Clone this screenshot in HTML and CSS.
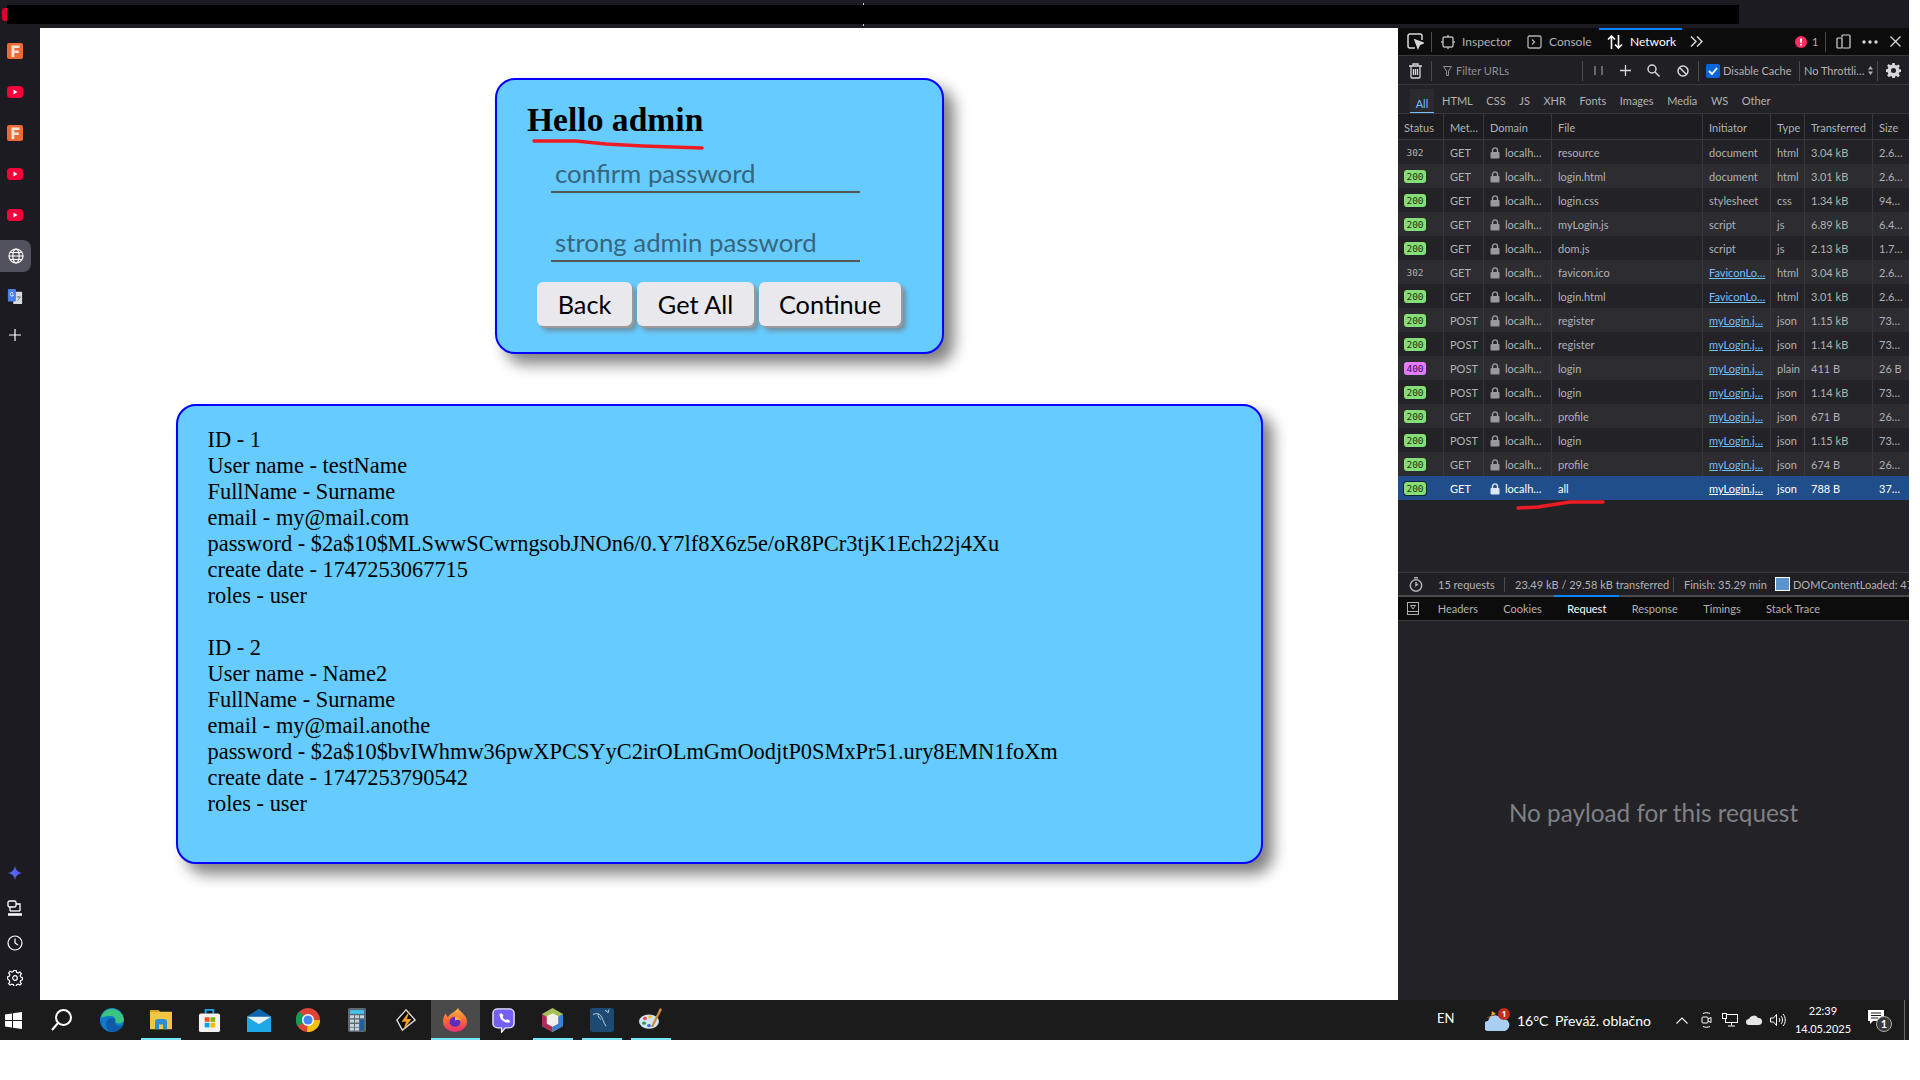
FILE: index.html
```html
<!DOCTYPE html>
<html lang="en">
<head>
    <meta charset="UTF-8">
    <meta name="viewport" content="width=device-width, initial-scale=1.0">
    <title>Hello admin</title>
    <link rel="stylesheet" href="styles.css">
</head>
<body>
    <svg class="defs" width="0" height="0">
        <symbol id="fav-f" viewBox="0 0 16 16">
            <rect x="0" y="0" width="16" height="16" rx="2" fill="#ee6a35"/>
            <path d="M4.500 14V2.500h8v2.600H7.300v2.500h4.500v2.500H7.300V14z" fill="#f4e3d8"/>
        </symbol>
        <symbol id="fav-yt" viewBox="0 0 16 12">
            <rect x="0" y="0" width="16" height="12" rx="3.500" fill="#f5003a"/>
            <path d="M6.500 3.500l4 2.500-4 2.500z" fill="#fff"/>
        </symbol>
        <symbol id="lock" viewBox="0 0 10 12">
            <path d="M2.500 5V3.400a2.500 2.500 0 0 1 5 0V5" fill="none" stroke="currentColor" stroke-width="1.400"/>
            <rect x="0.500" y="5" width="9" height="6.500" rx="1" fill="currentColor"/>
        </symbol>
    </svg>

    <div class="screen">
        <div class="topbar">
            <div class="topbar-black"><span class="topbar-dot"></span><span class="topbar-tick"></span></div>
        </div>

        <div class="main">
            <nav class="sidebar">
                <div class="side-group">
                    <span class="side-item"><svg width="16" height="16"><use href="#fav-f"/></svg></span>
                    <span class="side-item"><svg width="16" height="12"><use href="#fav-yt"/></svg></span>
                    <span class="side-item"><svg width="16" height="16"><use href="#fav-f"/></svg></span>
                    <span class="side-item"><svg width="16" height="12"><use href="#fav-yt"/></svg></span>
                    <span class="side-item"><svg width="16" height="12"><use href="#fav-yt"/></svg></span>
                    <span class="side-item side-active">
                        <svg width="16" height="16" viewBox="0 0 16 16" fill="none" stroke="#fff" stroke-width="1.200"><circle cx="8" cy="8" r="7"/><ellipse cx="8" cy="8" rx="3.200" ry="7"/><path d="M1 8h14M2 4.500h12M2 11.500h12"/></svg>
                    </span>
                    <span class="side-item">
                        <svg width="16" height="16" viewBox="0 0 16 18"><rect x="6" y="3" width="10" height="14" rx="1" fill="#d9dce3"/><rect x="0" y="0" width="9" height="14" rx="1" fill="#4a80ec"/><path d="M6 4.500a2 2 0 1 0 .4 2.400H4.600" fill="none" stroke="#fff" stroke-width="1"/><path d="M10 9h4.500M12 8v1M11 13l3-4" stroke="#5a6068" stroke-width=".8" fill="none"/></svg>
                    </span>
                    <span class="side-item side-plus">
                        <svg width="12" height="12" viewBox="0 0 12 12" stroke="#fff" stroke-width="1.200"><path d="M6 0v12M0 6h12"/></svg>
                    </span>
                </div>
                <div class="side-group side-bottom">
                    <span class="side-tool">
                        <svg width="14" height="14" viewBox="0 0 14 14"><defs><linearGradient id="spark" x1="0" y1="0" x2="1" y2="1"><stop offset="0" stop-color="#3f7cf7"/><stop offset="1" stop-color="#6a4cf0"/></linearGradient></defs><path d="M7 0c.6 4 3 6.400 7 7-4 .6-6.400 3-7 7-.6-4-3-6.400-7-7 4-.6 6.400-3 7-7z" fill="url(#spark)"/></svg>
                    </span>
                    <span class="side-tool">
                        <svg width="16" height="16" viewBox="0 0 16 16" fill="none" stroke="#fff" stroke-width="1.300"><rect x="1" y="1" width="8" height="6" rx="1.500"/><path d="M9 4h4v7M3 7v4"/><path d="M1 14.500h14" stroke-width="2.500"/><path d="M3 11h10"/></svg>
                    </span>
                    <span class="side-tool">
                        <svg width="16" height="16" viewBox="0 0 16 16" fill="none" stroke="#fff" stroke-width="1.200"><circle cx="8" cy="8" r="7"/><path d="M8 3.500V8l3 2"/></svg>
                    </span>
                    <span class="side-tool">
                        <svg width="16" height="16" viewBox="0 0 16 16" fill="none" stroke="#fff" stroke-width="1.200"><circle cx="8" cy="8" r="2.300"/><path d="M6.800 1h2.400l.4 2 1.500.7 1.800-1 1.500 1.800-1.200 1.600.4 1.600 1.800.8v2.100l-1.800.8-.4 1.600 1.200 1.600-1.500 1.400-1.800-1-1.500.7-.4 1.700H6.800l-.4-1.700-1.500-.7-1.800 1-1.500-1.400 1.200-1.600-.4-1.600L.6 9.700V7.600l1.800-.8.4-1.600-1.200-1.600 1.500-1.800 1.800 1 1.500-.7z" transform="translate(0 -.6) scale(1 .98)"/></svg>
                    </span>
                </div>
            </nav>

            <main class="page">
                <section class="card login-card">
                    <h1>Hello admin</h1>
                    <input class="field" type="text" placeholder="confirm password">
                    <input class="field" type="password" placeholder="strong admin password">
                    <div class="buttons">
                        <button class="btn-back">Back</button>
                        <button class="btn-all">Get All</button>
                        <button class="btn-continue">Continue</button>
                    </div>
                </section>

                <section class="card users-card">
                    ID - 1<br>
                    User name - testName<br>
                    FullName - Surname<br>
                    email - my@mail.com<br>
                    password - $2a$10$MLSwwSCwrngsobJNOn6/0.Y7lf8X6z5e/oR8PCr3tjK1Ech22j4Xu<br>
                    create date - 1747253067715<br>
                    roles - user<br>
                    <br>
                    ID - 2<br>
                    User name - Name2<br>
                    FullName - Surname<br>
                    email - my@mail.anothe<br>
                    password - $2a$10$bvIWhmw36pwXPCSYyC2irOLmGmOodjtP0SMxPr51.ury8EMN1foXm<br>
                    create date - 1747253790542<br>
                    roles - user<br>
                </section>
            </main>

            <aside class="devtools">
                <div class="dt-tabs">
                    <span class="dt-ico ico-pick">
                        <svg width="17" height="17" viewBox="0 0 17 17" fill="none" stroke="#d7d7db" stroke-width="1.500"><path d="M8 15H3a2 2 0 0 1-2-2V3a2 2 0 0 1 2-2h10a2 2 0 0 1 2 2v4"/><path d="M8 7l8 3-3.500 1.500L11 15z" fill="#d7d7db"/></svg>
                    </span>
                    <span class="dt-sep sep-pick"></span>
                    <span class="dt-tab tab-inspector">
                        <svg width="14" height="14" viewBox="0 0 14 14" fill="none" stroke="#b1b1b3" stroke-width="1.500"><rect x="2" y="2" width="10" height="10" rx="1.500"/><path d="M7 0v2M7 12v2M0 7h2M12 7h2"/></svg>
                        Inspector
                    </span>
                    <span class="dt-tab tab-console">
                        <svg width="15" height="14" viewBox="0 0 15 14" fill="none" stroke="#b1b1b3" stroke-width="1.300"><rect x="1" y="1" width="13" height="12" rx="1.500"/><path d="M5 4.500L7.500 7 5 9.500"/></svg>
                        Console
                    </span>
                    <span class="dt-tab tab-network">
                        <svg width="16" height="14" viewBox="0 0 16 14" fill="none" stroke="#fff" stroke-width="1.600"><path d="M4.500 14V1M1 4.500L4.500 1 8 4.500M11.500 0v13M8 9.500l3.500 3.500L15 9.500"/></svg>
                        Network
                    </span>
                    <svg class="dt-more" width="13" height="11" viewBox="0 0 13 11" fill="none" stroke="#d7d7db" stroke-width="1.500"><path d="M1 .5l5 5-5 5M7 .5l5 5-5 5"/></svg>
                    <span class="dt-errors">
                        <svg width="12" height="12" viewBox="0 0 12 12"><circle cx="6" cy="6" r="6" fill="#ff2d62"/><path d="M6 2.500v4.200M6 8v1.500" stroke="#fff" stroke-width="1.800"/></svg>
                        1
                    </span>
                    <span class="dt-sep sep-err"></span>
                    <svg class="dt-dock" width="15" height="15" viewBox="0 0 15 15" fill="none" stroke="#d7d7db" stroke-width="1.200"><path d="M6 4H2a1 1 0 0 0-1 1v8a1 1 0 0 0 1 1h4V4zM6 3V2a1 1 0 0 1 1-1h6a1 1 0 0 1 1 1v11a1 1 0 0 1-1 1H7"/></svg>
                    <svg class="dt-dots" width="16" height="4" viewBox="0 0 16 4" fill="#d7d7db"><circle cx="2" cy="2" r="1.700"/><circle cx="8" cy="2" r="1.700"/><circle cx="14" cy="2" r="1.700"/></svg>
                    <svg class="dt-close" width="11" height="11" viewBox="0 0 11 11" stroke="#d7d7db" stroke-width="1.300"><path d="M.5.500l10 10M10.500.500l-10 10"/></svg>
                </div>

                <div class="dt-filter">
                    <svg class="fl-trash" width="13" height="16" viewBox="0 0 13 16" fill="none" stroke="#d7d7db" stroke-width="1.300"><path d="M0 3h13M4 3V1h5v2M2 3v11a1 1 0 0 0 1 1h7a1 1 0 0 0 1-1V3M4.500 6v6M6.500 6v6M8.500 6v6"/></svg>
                    <span class="dt-sep sep-trash"></span>
                    <svg class="fl-funnel" width="9" height="10" viewBox="0 0 9 10" fill="none" stroke="#8f8f94"><path d="M.5.500h8L5.500 5v4.500h-2V5z"/></svg>
                    <span class="fl-input">Filter URLs</span>
                    <span class="dt-sep sep-input"></span>
                    <svg class="fl-pause" width="9" height="9" viewBox="0 0 9 9" stroke="#b1b1b3"><path d="M1 0v9M8 0v9"/></svg>
                    <svg class="fl-plus" width="11" height="11" viewBox="0 0 11 11" stroke="#d7d7db" stroke-width="1.300"><path d="M5.500 0v11M0 5.500h11"/></svg>
                    <svg class="fl-search" width="13" height="13" viewBox="0 0 13 13" fill="none" stroke="#d7d7db" stroke-width="1.500"><circle cx="5" cy="5" r="4"/><path d="M8 8l4.500 4.500"/></svg>
                    <svg class="fl-block" width="12" height="12" viewBox="0 0 12 12" fill="none" stroke="#d7d7db" stroke-width="1.500"><circle cx="6" cy="6" r="5"/><path d="M2.500 2.500l7 7"/></svg>
                    <span class="dt-sep sep-block"></span>
                    <span class="fl-check"><svg width="10" height="8" viewBox="0 0 10 8" fill="none" stroke="#fff" stroke-width="1.800"><path d="M1 4l3 3 5-6"/></svg></span>
                    <span class="fl-cache">Disable Cache</span>
                    <span class="dt-sep sep-cache"></span>
                    <span class="fl-throttle">No Throttli…</span>
                    <svg class="fl-updown" width="5" height="9" viewBox="0 0 5 9" fill="#b1b1b3"><path d="M2.500 0L5 3.500H0zM2.500 9L0 5.500h5z"/></svg>
                    <span class="dt-sep sep-throttle"></span>
                    <svg class="fl-gear" width="15" height="15" viewBox="0 0 15 15"><path d="M6.300 0h2.400l.3 2 1.500.6 1.700-1.200 1.700 1.700-1.200 1.700.6 1.500 2 .3v2.400l-2 .3-.6 1.500 1.200 1.700-1.700 1.700-1.700-1.200-1.500.6-.3 2H6.300l-.3-2-1.500-.6-1.700 1.200-1.700-1.700 1.200-1.700-.6-1.500-2-.3V6.300l2-.3.6-1.500L1.100 2.800l1.700-1.700 1.700 1.200L6 1.700z" fill="#d7d7db"/><circle cx="7.500" cy="7.500" r="2.500" fill="#1f1f24"/></svg>
                </div>

                <div class="dt-types">
                    <span class="type type-active">All</span>
                    <span class="type">HTML</span>
                    <span class="type">CSS</span>
                    <span class="type">JS</span>
                    <span class="type">XHR</span>
                    <span class="type">Fonts</span>
                    <span class="type">Images</span>
                    <span class="type">Media</span>
                    <span class="type">WS</span>
                    <span class="type">Other</span>
                </div>

                <div class="net-head row">
                    <span>Status</span><span>Met…</span><span>Domain</span><span>File</span><span>Initiator</span><span>Type</span><span>Transferred</span><span>Size</span>
                </div>
                <div class="net-body">
                    <div class="row"><span><b class="code">302</b></span><span>GET</span><span class="dom"><svg width="10" height="12"><use href="#lock"/></svg>localh…</span><span>resource</span><span>document</span><span>html</span><span>3.04 kB</span><span>2.6…</span></div>
                    <div class="row"><span><b class="code ok">200</b></span><span>GET</span><span class="dom"><svg width="10" height="12"><use href="#lock"/></svg>localh…</span><span>login.html</span><span>document</span><span>html</span><span>3.01 kB</span><span>2.6…</span></div>
                    <div class="row"><span><b class="code ok">200</b></span><span>GET</span><span class="dom"><svg width="10" height="12"><use href="#lock"/></svg>localh…</span><span>login.css</span><span>stylesheet</span><span>css</span><span>1.34 kB</span><span>94…</span></div>
                    <div class="row"><span><b class="code ok">200</b></span><span>GET</span><span class="dom"><svg width="10" height="12"><use href="#lock"/></svg>localh…</span><span>myLogin.js</span><span>script</span><span>js</span><span>6.89 kB</span><span>6.4…</span></div>
                    <div class="row"><span><b class="code ok">200</b></span><span>GET</span><span class="dom"><svg width="10" height="12"><use href="#lock"/></svg>localh…</span><span>dom.js</span><span>script</span><span>js</span><span>2.13 kB</span><span>1.7…</span></div>
                    <div class="row"><span><b class="code">302</b></span><span>GET</span><span class="dom"><svg width="10" height="12"><use href="#lock"/></svg>localh…</span><span>favicon.ico</span><span><a>FaviconLo…</a></span><span>html</span><span>3.04 kB</span><span>2.6…</span></div>
                    <div class="row"><span><b class="code ok">200</b></span><span>GET</span><span class="dom"><svg width="10" height="12"><use href="#lock"/></svg>localh…</span><span>login.html</span><span><a>FaviconLo…</a></span><span>html</span><span>3.01 kB</span><span>2.6…</span></div>
                    <div class="row"><span><b class="code ok">200</b></span><span>POST</span><span class="dom"><svg width="10" height="12"><use href="#lock"/></svg>localh…</span><span>register</span><span><a>myLogin.j…</a></span><span>json</span><span>1.15 kB</span><span>73…</span></div>
                    <div class="row"><span><b class="code ok">200</b></span><span>POST</span><span class="dom"><svg width="10" height="12"><use href="#lock"/></svg>localh…</span><span>register</span><span><a>myLogin.j…</a></span><span>json</span><span>1.14 kB</span><span>73…</span></div>
                    <div class="row"><span><b class="code bad">400</b></span><span>POST</span><span class="dom"><svg width="10" height="12"><use href="#lock"/></svg>localh…</span><span>login</span><span><a>myLogin.j…</a></span><span>plain</span><span>411 B</span><span>26 B</span></div>
                    <div class="row"><span><b class="code ok">200</b></span><span>POST</span><span class="dom"><svg width="10" height="12"><use href="#lock"/></svg>localh…</span><span>login</span><span><a>myLogin.j…</a></span><span>json</span><span>1.14 kB</span><span>73…</span></div>
                    <div class="row"><span><b class="code ok">200</b></span><span>GET</span><span class="dom"><svg width="10" height="12"><use href="#lock"/></svg>localh…</span><span>profile</span><span><a>myLogin.j…</a></span><span>json</span><span>671 B</span><span>26…</span></div>
                    <div class="row"><span><b class="code ok">200</b></span><span>POST</span><span class="dom"><svg width="10" height="12"><use href="#lock"/></svg>localh…</span><span>login</span><span><a>myLogin.j…</a></span><span>json</span><span>1.15 kB</span><span>73…</span></div>
                    <div class="row"><span><b class="code ok">200</b></span><span>GET</span><span class="dom"><svg width="10" height="12"><use href="#lock"/></svg>localh…</span><span>profile</span><span><a>myLogin.j…</a></span><span>json</span><span>674 B</span><span>26…</span></div>
                    <div class="row selected"><span><b class="code ok">200</b></span><span>GET</span><span class="dom"><svg width="10" height="12"><use href="#lock"/></svg>localh…</span><span>all</span><span><a>myLogin.j…</a></span><span>json</span><span>788 B</span><span>37…</span></div>
                </div>

                <div class="net-status">
                    <svg class="st-clock" width="14" height="15" viewBox="0 0 14 15" fill="none" stroke="#b1b1b3" stroke-width="1.500"><circle cx="7" cy="8.500" r="5.700"/><path d="M5 .8h4M7 5v3.500l2-1.500"/></svg>
                    <span class="st-item st-first">15 requests</span>
                    <span class="st-item st-size">23.49 kB / 29.58 kB transferred</span>
                    <span class="st-item st-last">Finish: 35.29 min</span>
                    <span class="st-box"></span>
                    <span class="st-dom">DOMContentLoaded: 47</span>
                </div>

                <div class="dt-panel-tabs">
                    <svg class="pt-toggle" width="12" height="13" viewBox="0 0 12 13" fill="none" stroke="#b1b1b3"><rect x=".5" y=".5" width="11" height="12"/><path d="M.5 9.500h11M3.500 3.500h5L6 7z"/></svg>
                    <span class="pt-tab">Headers</span>
                    <span class="pt-tab">Cookies</span>
                    <span class="pt-tab pt-active">Request</span>
                    <span class="pt-tab">Response</span>
                    <span class="pt-tab">Timings</span>
                    <span class="pt-tab">Stack Trace</span>
                </div>

                <div class="dt-panel">No payload for this request</div>
            </aside>
        </div>

        <footer class="taskbar">
            <span class="tb-start">
                <svg width="17" height="17" viewBox="0 0 17 17" fill="#fff"><path d="M0 2.500L7 1.500v6.500H0zM8 1.300L17 0v8H8zM0 9h7v6.500l-7-1zM8 9h9v8l-9-1.300z"/></svg>
            </span>
            <span class="tb-app tb-search">
                <svg width="24" height="24" viewBox="0 0 24 24" fill="none" stroke="#fff" stroke-width="2"><circle cx="14.500" cy="9.500" r="7.500"/><path d="M9 15l-6 7"/></svg>
            </span>
            <span class="tb-app">
                <svg width="24" height="24" viewBox="0 0 24 24"><circle cx="12" cy="12" r="12" fill="#0c7bc8"/><path d="M1 10C3 2 11-1 17 2c4 2 7 6 7 11-2 3-7 3-9 1 1-3 0-6-4-6-5 0-9 1-10 2z" fill="#39c481"/><path d="M6 16c0-4 3-6 6-6 3 0 4 2 3 5 1 3 5 4 8 2-2 5-8 8-13 6-3-1-4-4-4-7z" fill="#0f5ba8"/></svg>
            </span>
            <span class="tb-app tb-running">
                <svg width="22" height="22" viewBox="0 0 22 24" preserveAspectRatio="none"><path d="M0 1h8l2 2h12v19H0z" fill="#f4c542"/><path d="M0 1h8l2 2H0z" fill="#d99a2b"/><path d="M5 22v-8a3 3 0 0 1 3-3h6a3 3 0 0 1 3 3v8h-4v-5H9v5z" fill="#2c8fd6"/></svg>
            </span>
            <span class="tb-app">
                <svg width="23" height="24" viewBox="0 0 24 26" preserveAspectRatio="none"><path d="M8 6V2h8v4" fill="none" stroke="#16a7ea" stroke-width="2"/><rect x="1" y="6" width="22" height="20" rx="2" fill="#f2f2f2"/><rect x="7" y="10" width="5" height="5" fill="#f25022"/><rect x="13" y="10" width="5" height="5" fill="#7fba00"/><rect x="7" y="16" width="5" height="5" fill="#00a4ef"/><rect x="13" y="16" width="5" height="5" fill="#ffb900"/></svg>
            </span>
            <span class="tb-app">
                <svg width="24" height="23" viewBox="0 0 24 24" preserveAspectRatio="none"><path d="M0 8L12 0l12 8v16H0z" fill="#1fa8e8"/><path d="M0 8L12 0l12 8-12 8z" fill="#0a64b0"/><path d="M0 8h24L12 16z" fill="#e8f4fb"/></svg>
            </span>
            <span class="tb-app">
                <svg width="24" height="24" viewBox="0 0 24 24"><circle cx="12" cy="12" r="12" fill="#db4437"/><path d="M12 12L1.600 18A12 12 0 0 1 3 3.500z" fill="#0f9d58"/><path d="M12 12h12a12 12 0 0 1-13 12z" fill="#f4c20d"/><circle cx="12" cy="12" r="6" fill="#fff"/><circle cx="12" cy="12" r="4.600" fill="#4285f4"/></svg>
            </span>
            <span class="tb-app">
                <svg width="18" height="24" viewBox="0 0 18 33" preserveAspectRatio="none"><rect width="18" height="33" rx="2" fill="#5d6a75"/><rect x="2" y="3" width="14" height="5" fill="#3fc6e8"/><g fill="#c8d2da"><rect x="2" y="10" width="4" height="4"/><rect x="7" y="10" width="4" height="4"/><rect x="12" y="10" width="4" height="4"/><rect x="2" y="16" width="4" height="4"/><rect x="7" y="16" width="4" height="4"/><rect x="2" y="22" width="4" height="4"/><rect x="7" y="22" width="4" height="4"/><rect x="2" y="27" width="4" height="4"/><rect x="7" y="27" width="4" height="4"/></g><rect x="12" y="16" width="4" height="15" fill="#1a5ea8"/></svg>
            </span>
            <span class="tb-app">
                <svg width="20" height="24" viewBox="0 0 22 26" preserveAspectRatio="none"><path d="M11 2L1 13l6 11 14-11z" fill="#0a0a0a" stroke="#ddd" stroke-width="1.500"/><path d="M15 3L6 15h5l-3 9 9-12h-5z" fill="#f59a23"/></svg>
            </span>
            <span class="tb-app tb-running tb-active">
                <svg width="24" height="24" viewBox="0 0 24 26" preserveAspectRatio="none"><defs><linearGradient id="fox" x1="0" y1="0" x2="0" y2="1"><stop offset="0" stop-color="#ffbd4f"/><stop offset=".5" stop-color="#ff6b2d"/><stop offset="1" stop-color="#ee2a7b"/></linearGradient></defs><path d="M15 0c1 4 9 7 9 15a12 11 0 0 1-24 0C0 11 1 8 3 6c0 2 1 3 2 4 1-4 7-5 10-10z" fill="url(#fox)"/><circle cx="12" cy="15" r="5.500" fill="#5c2fb5"/><path d="M12 9.500c3-.5 6 2 6 5-2-2-4-2-6-1z" fill="#ffb03a"/></svg>
            </span>
            <span class="tb-app">
                <svg width="23" height="25" viewBox="0 0 24 29" preserveAspectRatio="none"><path d="M6 1h12a5 5 0 0 1 5 5v12a5 5 0 0 1-5 5h-4l-4 5v-5H6a5 5 0 0 1-5-5V6a5 5 0 0 1 5-5z" fill="#7360f2" stroke="#e8e4ff" stroke-width="1.500"/><path d="M8 7l2-1 2 3-1 1.500c.5 1.500 2 3 3.500 3.500L16 13l3 2-1 2c-5 1-11-5-10-10z" fill="#fff"/></svg>
            </span>
            <span class="tb-app tb-running">
                <svg width="21" height="24" viewBox="0 0 22 32" preserveAspectRatio="none"><path d="M11 0l11 8v16l-11 8L0 24V8z" fill="#a8c05a"/><path d="M0 8l11 8v16L0 24z" fill="#b12c5c"/><path d="M22 8L11 16v16l11-8z" fill="#3a7fd0"/><path d="M5 11l6-4 6 4v10l-6 4-6-4z" fill="#f0f0ea"/></svg>
            </span>
            <span class="tb-app tb-running">
                <svg width="24" height="24" viewBox="0 0 24 33" preserveAspectRatio="none"><rect width="24" height="33" rx="3" fill="#1d4a72"/><path d="M3 9c3-2 6-2 8 2 2 4 2 8 5 14M8 8c0 3 1 6 3 8M15 3l3 3M19 2l-1 5" fill="none" stroke="#cfe0ee" stroke-width="1"/></svg>
            </span>
            <span class="tb-app tb-running">
                <svg width="24" height="24" viewBox="0 0 24 30" preserveAspectRatio="none"><ellipse cx="10" cy="17" rx="10" ry="9" fill="#cfe6f2"/><circle cx="6" cy="13" r="2" fill="#e34a4a"/><circle cx="11" cy="11" r="2" fill="#f2c230"/><circle cx="5" cy="19" r="2" fill="#3a9a4a"/><circle cx="10" cy="22" r="2" fill="#3a70d0"/><path d="M21 0l2 2-9 22-2-1z" fill="#c98a3c"/></svg>
            </span>

            <div class="tray">
                <span class="tray-lang">EN</span>
                <span class="tray-weather">
                    <svg width="25" height="24" viewBox="0 0 25 24"><path d="M1 10l5-1 1-6 4 3z" fill="#f5a623"/><path d="M3 23a5 5 0 0 1 0-10 7 7 0 0 1 13-2 6 6 0 0 1 4 12z" fill="#a9cff2"/><circle cx="19" cy="6" r="6" fill="#c42b1c"/><text x="19" y="9" font-size="8" font-family="Open Sans" font-weight="700" fill="#fff" text-anchor="middle">1</text></svg>
                </span>
                <span class="tray-temp">16°C</span>
                <span class="tray-cond">Převáž. oblačno</span>
                <svg class="tray-caret" width="12" height="7" viewBox="0 0 12 7" fill="none" stroke="#fff" stroke-width="1.100"><path d="M.5 6.500L6 1l5.500 5.500"/></svg>
                <svg class="tray-meet" width="11" height="16" viewBox="0 0 11 16" fill="none" stroke="#fff"><path d="M2 1.500c2-1 5-1 7 0M2 14.500c2 1 5 1 7 0"/><rect x="1" y="5" width="6" height="6" rx="1"/><path d="M7 7l3-1.500v5L7 9"/></svg>
                <svg class="tray-net" width="16" height="14" viewBox="0 0 16 14" fill="none" stroke="#fff"><rect x="3.500" y="1.500" width="12" height="8"/><path d="M9.500 9.500v3M6 13h7"/><rect x=".5" y=".5" width="4" height="5" fill="#1b1b1b"/></svg>
                <svg class="tray-cloud" width="16" height="10" viewBox="0 0 16 10" fill="#e6e6e6"><path d="M3 10a3 3 0 0 1 0-6 5 5 0 0 1 9-1 3.500 3.500 0 0 1 1 7z"/></svg>
                <svg class="tray-vol" width="16" height="14" viewBox="0 0 16 14" fill="none" stroke="#fff"><path d="M.5 5v4h3l3 3.500v-11L3.500 5zM9 5c1 1 1 3 0 4M11 3c2 2 2 6 0 8M13 1c3 3 3 9 0 12"/></svg>
                <span class="tray-clock">22:39<br>14.05.2025</span>
                <span class="tray-note">
                    <svg width="16" height="14" viewBox="0 0 16 14"><path d="M0 0h16v11H5l-3 3v-3H0z" fill="#fff"/><path d="M3 3h10M3 5.500h10M3 8h7" stroke="#1b1b1b"/></svg>
                    <b class="note-badge">1</b>
                </span>
                <span class="tray-edge"></span>
            </div>
        </footer>

        <svg class="marks" width="1909" height="1040">
            <path d="M534 141L576 141 606 144 643 146 702 148" />
            <path d="M1518 508L1538 507 1570 502 1603 502" />
        </svg>
    </div>
</body>
</html>
```

FILE: styles.css
```css
* {
    box-sizing: border-box;
}
body {
    margin: 0;
    background: white;
    font-family: "Lato", sans-serif;
}
.defs {
    position: absolute;
}
.screen {
    position: relative;
    width: 1909px;
    height: 1040px;
    display: flex;
    flex-direction: column;
    overflow: hidden;
}
.marks {
    position: absolute;
    left: 0;
    top: 0;
    pointer-events: none;
}
.marks path {
    fill: none;
    stroke: #ed1c24;
    stroke-width: 3.5;
    stroke-linejoin: round;
    stroke-linecap: round;
}

/* top strip */
.topbar {
    height: 28px;
    flex: none;
    background: #1c1b22;
    padding-top: 5px;
}
.topbar-black {
    position: relative;
    width: 1732px;
    height: 19px;
    margin-left: 7px;
    background: black;
}
.topbar-dot {
    position: absolute;
    left: -5px;
    top: 3px;
    width: 5px;
    height: 13px;
    background: #e0002b;
    border-radius: 3px 0 0 3px;
}
.topbar-tick {
    position: absolute;
    left: 856px;
    top: -2px;
    width: 1px;
    height: 23px;
    background: linear-gradient(#ccc 2px, transparent 2px, transparent 21px, #ccc 21px);
}

.main {
    flex: 1;
    display: flex;
    min-height: 0;
}

/* browser sidebar */
.sidebar {
    width: 40px;
    flex: none;
    background: #1c1b22;
    display: flex;
    flex-direction: column;
    justify-content: space-between;
    padding-top: 2px;
    padding-bottom: 5px;
}
.side-group {
    display: flex;
    flex-direction: column;
}
.side-item {
    height: 41px;
    width: 30px;
    display: flex;
    align-items: center;
    justify-content: center;
}
.side-active {
    width: 31px;
    height: 32px;
    margin: 4.5px 0;
    background: #52525e;
    border-radius: 0 8px 8px 0;
}
.side-plus {
    height: 36px;
}
.side-tool {
    height: 35px;
    width: 30px;
    display: flex;
    align-items: center;
    justify-content: center;
}

/* page area */
.page {
    flex: 1;
    background: white;
    display: flex;
    flex-direction: column;
    align-items: center;
    padding-top: 50px;
}
.card {
    flex: none;
    background: #66ccff;
    border: 2px solid #0000ff;
    border-radius: 20px;
    box-shadow: 10px 10px 15px #808080;
}
.login-card {
    width: 449px;
    height: 276px;
    padding: 21px 30px 0 30px;
    margin-left: 1px;
    margin-bottom: 50px;
    display: flex;
    flex-direction: column;
}
.login-card h1 {
    margin: 0;
    font-family: "Liberation Serif", serif;
    font-size: 33.6px;
    line-height: 38px;
    font-weight: bold;
    color: black;
}
.field {
    display: block;
    width: 309px;
    height: 36px;
    margin: 18px 0 0 24px;
    padding: 0 3px 2px 4px;
    background: transparent;
    border: none;
    border-bottom: 2px solid #555555;
    outline: none;
    font-family: "Lato", sans-serif;
    font-size: 25.8px;
}
.field + .field {
    margin-top: 33px;
}
.field::placeholder {
    color: #36657e;
    opacity: 1;
}
.buttons {
    display: flex;
    gap: 5px;
    margin: 20px 0 0 10px;
}
.buttons button {
    height: 44px;
    padding: 0;
    background: #e9e9ed;
    border: none;
    border-radius: 6px;
    box-shadow: 2px 2px 0 #9a9a9e, 5px 5px 5px #6f8ea0;
    font-family: "Lato", sans-serif;
    font-size: 25.3px;
    color: black;
}
.btn-back {
    width: 95px;
}
.btn-all {
    width: 117px;
}
.btn-continue {
    width: 142px;
}
.users-card {
    width: 1087px;
    height: 460px;
    padding: 21px 30px;
    font-family: "Liberation Serif", serif;
    font-size: 22.4px;
    color: black;
}

/* devtools */
.devtools {
    width: 511px;
    flex: none;
    display: flex;
    flex-direction: column;
    background: #232327;
    color: #b1b1b3;
    font-size: 11px;
}
.dt-tabs {
    height: 28px;
    flex: none;
    display: flex;
    align-items: center;
    background: #0c0c0d;
    border-bottom: 1px solid #38383d;
}
.dt-sep {
    width: 1px;
    height: 20px;
    background: #4a4a4f;
    flex: none;
}
.dt-ico {
    display: flex;
    margin-left: 9px;
}
.sep-pick {
    margin-left: 7px;
}
.dt-tab {
    display: flex;
    align-items: center;
    height: 100%;
    gap: 7px;
    font-size: 12px;
}
.tab-inspector {
    width: 86px;
    margin-left: 9px;
}
.tab-console {
    width: 72px;
}
.tab-network {
    width: 83px;
    padding-left: 8px;
    color: white;
    border-top: 2px solid #0a84ff;
    padding-bottom: 2px;
}
.dt-more {
    margin-left: 8px;
}
.dt-errors {
    display: flex;
    align-items: center;
    gap: 5px;
    width: 26px;
    margin-left: 92px;
    color: #b1b1b3;
}
.sep-err {
    margin-left: 4px;
}
.dt-dock {
    margin-left: 10px;
}
.dt-dots {
    margin-left: 11px;
}
.dt-close {
    margin-left: 12px;
}
.dt-filter {
    height: 29px;
    flex: none;
    display: flex;
    align-items: center;
    background: #1f1f24;
    border-bottom: 1px solid #38383d;
    padding-top: 1px;
}
.dt-filter > * {
    flex: none;
}
.fl-trash {
    margin-left: 11px;
}
.sep-trash {
    margin-left: 9px;
}
.fl-funnel {
    margin-left: 11px;
}
.fl-input {
    width: 80px;
    margin-left: 4px;
    margin-right: 46px;
    color: #8f8f94;
}
.fl-pause {
    margin-left: 11px;
}
.fl-plus {
    margin-left: 17px;
}
.fl-search {
    margin-left: 16px;
}
.fl-block {
    margin-left: 17px;
}
.sep-block {
    margin-left: 9px;
}
.fl-check {
    width: 14px;
    height: 14px;
    margin-left: 7px;
    background: #0a66d8;
    border-radius: 2px;
    display: flex;
    align-items: center;
    justify-content: center;
}
.fl-cache {
    margin-left: 3px;
    width: 71px;
    white-space: nowrap;
}
.sep-cache {
    margin-left: 5px;
}
.fl-throttle {
    width: 62px;
    margin-left: 4px;
    white-space: nowrap;
}
.fl-updown {
    margin-left: 2px;
}
.sep-throttle {
    margin-left: 4px;
}
.fl-gear {
    margin-left: 8px;
}
.dt-types {
    height: 29px;
    flex: none;
    display: flex;
    align-items: center;
    padding-left: 12px;
    gap: 13.6px;
    background: #232327;
    border-bottom: 1px solid #38383d;
}
.type {
    line-height: 24px;
    padding-top: 3px;
}
.type-active {
    width: 24px;
    padding: 3px 0 0;
    margin-right: -5.6px;
    text-align: center;
    color: #75bfff;
    background: #2a2a2f;
    border-bottom: 1px solid #75bfff;
    height: 24px;
    margin-top: 3px;
}
.row {
    display: grid;
    grid-template-columns: 46px 40px 68px 151px 68px 34px 68px 36px;
    height: 24px;
    align-items: stretch;
}
.row > span {
    display: flex;
    align-items: center;
    padding-left: 6px;
    padding-top: 1px;
    white-space: nowrap;
    overflow: hidden;
    border-right: 1px solid #38383d;
}
.row > span:last-child {
    border-right: none;
}
.net-head {
    height: 26px;
    flex: none;
    background: #1c1c21;
    border-bottom: 1px solid #38383d;
}
.net-body {
    height: 432px;
    flex: none;
}
.net-body .row:nth-child(even) {
    background: #2c2c31;
}
.dom svg {
    color: #9a9a9e;
    margin-right: 5px;
    flex: none;
}
.code {
    font-family: "DejaVu Sans Mono", monospace;
    font-size: 9.5px;
    font-weight: normal;
    width: 22px;
    height: 13px;
    line-height: 13px;
    text-align: center;
    border-radius: 3px;
}
.code.ok {
    background: #86de74;
    color: #1c3a14;
}
.code.bad {
    background: #e57bff;
    color: #3b1050;
}
.row a {
    color: #75bfff;
    text-decoration: underline;
}
.net-body .selected {
    background: #204e8a;
    color: white;
}
.selected > span {
    border-right-color: transparent;
}
.selected .dom svg {
    color: #dfe6f3;
}
.selected a {
    color: white;
}
.selected .code.ok {
    box-shadow: 0 0 0 1px #0c2238;
}
.net-status {
    height: 23px;
    flex: none;
    display: flex;
    align-items: center;
    background: #1f1f24;
    border-top: 1px solid #38383d;
    overflow: hidden;
    white-space: nowrap;
}
.net-status > * {
    flex: none;
}
.st-clock {
    margin-left: 11px;
}
.st-item {
    height: 15px;
    line-height: 15px;
    border-right: 1px solid #4a4a4f;
    margin-right: 10px;
}
.st-first {
    width: 67px;
    margin-left: 15px;
}
.st-size {
    width: 159px;
}
.st-last {
    width: 81px;
    border-right: none;
}
.st-box {
    width: 15px;
    height: 14px;
    background: #5b95d0;
    border: 1px solid white;
    margin-right: 3px;
}
.dt-panel-tabs {
    height: 26px;
    flex: none;
    display: flex;
    align-items: center;
    background: #0c0c0d;
    border-top: 2px solid #4a4a4f;
    border-bottom: 1px solid #38383d;
}
.pt-toggle {
    margin-left: 9px;
    margin-right: 6px;
}
.pt-tab {
    height: 100%;
    line-height: 23px;
    padding: 0 12.7px;
}
.pt-active {
    color: white;
    border-top: 2px solid #0a84ff;
    margin-top: -2px;
    line-height: 23px;
    height: 25px;
}
.dt-panel {
    flex: 1;
    display: flex;
    align-items: center;
    justify-content: center;
    color: #808086;
    font-size: 24.3px;
    padding-top: 3px;
}

/* windows taskbar */
.taskbar {
    height: 40px;
    flex: none;
    display: flex;
    align-items: stretch;
    background: #1b1b1b;
    color: white;
}
.tb-start {
    width: 38px;
    display: flex;
    align-items: center;
    justify-content: center;
    padding-right: 12px;
}
.tb-app {
    position: relative;
    width: 49px;
    padding-right: 2px;
    display: flex;
    align-items: center;
    justify-content: center;
}
.tb-search {
    width: 50px;
    padding-right: 4px;
}
.tb-running::after {
    content: "";
    position: absolute;
    left: 4px;
    right: 5px;
    bottom: 0;
    height: 2px;
    background: #76e5f5;
}
.tb-active {
    background: #4a4a4a;
}
.tb-active::after {
    left: 0;
    right: 0;
}
.tray {
    flex: 1;
    position: relative;
    display: flex;
    align-items: center;
    font-size: 14px;
    padding-left: 761px;
}
.tray > * {
    flex: none;
}
.tray-lang {
    font-size: 13px;
    width: 48px;
    margin-top: -4px;
}
.tray-weather {
    display: flex;
    width: 32px;
}
.tray-temp {
    width: 38px;
}
.tray-cond {
    width: 121px;
    white-space: nowrap;
}
.tray-caret {
    margin-right: 13px;
}
.tray-meet {
    margin-right: 10px;
}
.tray-net {
    margin-right: 8px;
}
.tray-cloud {
    margin-right: 8px;
}
.tray-clock {
    width: 70px;
    margin-left: 2px;
    text-align: center;
    font-size: 11px;
    line-height: 18px;
}
.tray-note {
    position: relative;
    display: flex;
    margin-left: 10px;
    margin-top: -6px;
}
.note-badge {
    position: absolute;
    left: 8px;
    top: 6px;
    width: 16px;
    height: 16px;
    border-radius: 50%;
    background: #3a3a3a;
    border: 1px solid #aaa;
    font-size: 11px;
    line-height: 14px;
    text-align: center;
}
.tray-edge {
    position: absolute;
    right: 4px;
    top: 0;
    bottom: 0;
    width: 1px;
    background: #666;
}
```
